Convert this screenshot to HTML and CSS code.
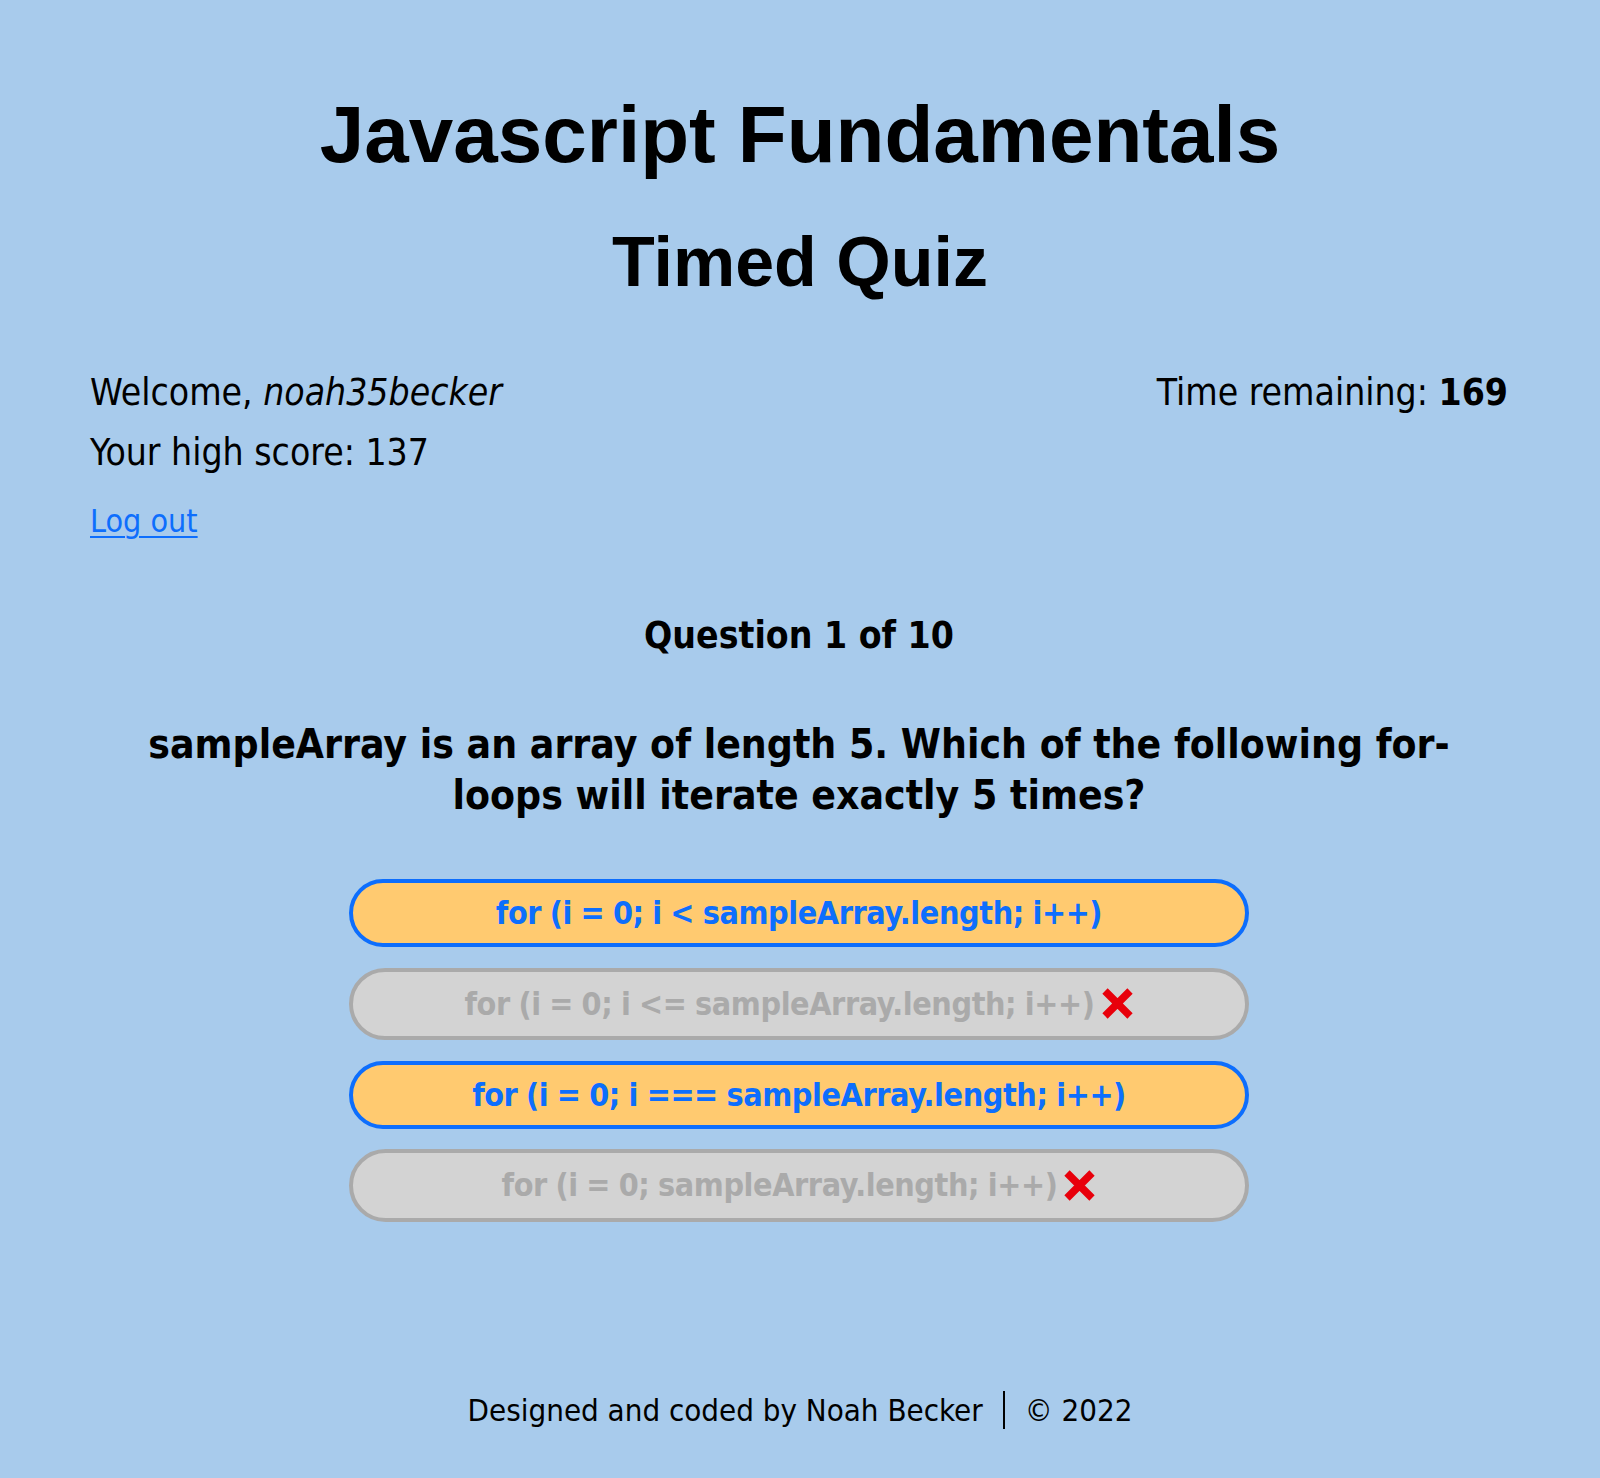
FILE: index.html
```html
<!DOCTYPE html>
<html lang="en">
<head>
<meta charset="utf-8">
<title>Javascript Fundamentals — Timed Quiz</title>
<link rel="stylesheet" href="styles.css">
</head>
<body>
<header class="site-header">
  <h1 class="site-title">Javascript Fundamentals</h1>
  <h2 class="site-subtitle">Timed Quiz</h2>
</header>

<main class="page">
  <section class="status">
    <div class="user">
      <p class="user-line">Welcome, <em>noah35becker</em></p>
      <p class="user-line">Your high score: 137</p>
      <a class="logout" href="#">Log out</a>
    </div>
    <p class="timer">Time remaining: <strong>169</strong></p>
  </section>

  <section class="quiz">
    <p class="quiz-count">Question 1 of 10</p>
    <p class="quiz-question">sampleArray is an array of length 5. Which of the following for-loops will iterate exactly 5 times?</p>
    <div class="choices">
      <button class="choice">for (i = 0; i &lt; sampleArray.length; i++)</button>
      <button class="choice choice-wrong">for (i = 0; i &lt;= sampleArray.length; i++) <svg class="wrong-mark" viewBox="0 0 33 33" width="33" height="33" aria-hidden="true"><path d="M4 4 L29 29 M29 4 L4 29" stroke="#e8000b" stroke-width="7.5" fill="none"/></svg></button>
      <button class="choice">for (i = 0; i === sampleArray.length; i++)</button>
      <button class="choice choice-wrong">for (i = 0; sampleArray.length; i++) <svg class="wrong-mark" viewBox="0 0 33 33" width="33" height="33" aria-hidden="true"><path d="M4 4 L29 29 M29 4 L4 29" stroke="#e8000b" stroke-width="7.5" fill="none"/></svg></button>
    </div>
  </section>
</main>

<footer class="site-footer">
  <span>Designed and coded by Noah Becker</span><span class="footer-sep"></span><span>© 2022</span>
</footer>
</body>
</html>
```

FILE: styles.css
```css
* { box-sizing: border-box; }

html, body {
  margin: 0;
  padding: 0;
}

body {
  background: #a8cbec;
  color: #000;
  font-family: "DejaVu Sans Condensed", "DejaVu Sans", "Noto Sans", sans-serif;
  font-stretch: condensed;
  min-height: 1478px;
}

.site-header {
  text-align: center;
  padding-top: 87px;
}

.site-title {
  margin: 0;
  font-family: "Liberation Sans", Arial, sans-serif;
  font-size: 80px;
  line-height: 96px;
  font-weight: 700;
}

.site-subtitle {
  margin: 37px 0 0;
  font-family: "Liberation Sans", Arial, sans-serif;
  font-size: 70px;
  line-height: 84px;
  font-weight: 700;
}

.page {
  padding: 0 92px 0 90px;
}

.status {
  display: flex;
  justify-content: space-between;
  align-items: flex-start;
  margin-top: 59px;
}

.user-line,
.timer {
  margin: 0;
  font-size: 37px;
  line-height: 60px;
}

.user-line em { font-style: italic; }

.logout {
  display: inline-block;
  margin-top: 14px;
  font-size: 32px;
  line-height: 48px;
  color: #0d6efd;
  text-decoration: underline;
  text-decoration-thickness: 2px;
  text-underline-offset: 4px;
}

.quiz {
  text-align: center;
}

.quiz-count {
  margin: 66px 0 0;
  font-size: 37px;
  line-height: 50px;
  font-weight: 700;
}

.quiz-question {
  margin: 58px auto 0;
  max-width: 1330px;
  font-size: 40.5px;
  line-height: 51px;
  font-weight: 700;
}

.choices {
  width: 900px;
  margin: 58px auto 0;
  display: flex;
  flex-direction: column;
  gap: 20.5px;
}

.choice {
  display: flex;
  align-items: center;
  justify-content: center;
  gap: 6px;
  width: 100%;
  height: 68px;
  padding: 0 30px;
  border: 4px solid #0d6efd;
  border-radius: 999px;
  background: #ffca70;
  color: #0d6efd;
  font-family: inherit;
  font-stretch: inherit;
  font-size: 32px;
  letter-spacing: -0.4px;
  word-spacing: -1px;
  font-weight: 700;
  cursor: pointer;
}

.choice-wrong {
  height: 72.5px;
  border-color: #aaaaaa;
  background: #d3d3d3;
  color: #aaaaaa;
}

.wrong-mark {
  flex: none;
  display: block;
}

.site-footer {
  display: flex;
  justify-content: center;
  align-items: center;
  margin-top: 164px;
  font-size: 31px;
  line-height: 48px;
}

.footer-sep {
  display: block;
  width: 2px;
  height: 38px;
  background: #000;
  margin: 0 20px;
}
```
